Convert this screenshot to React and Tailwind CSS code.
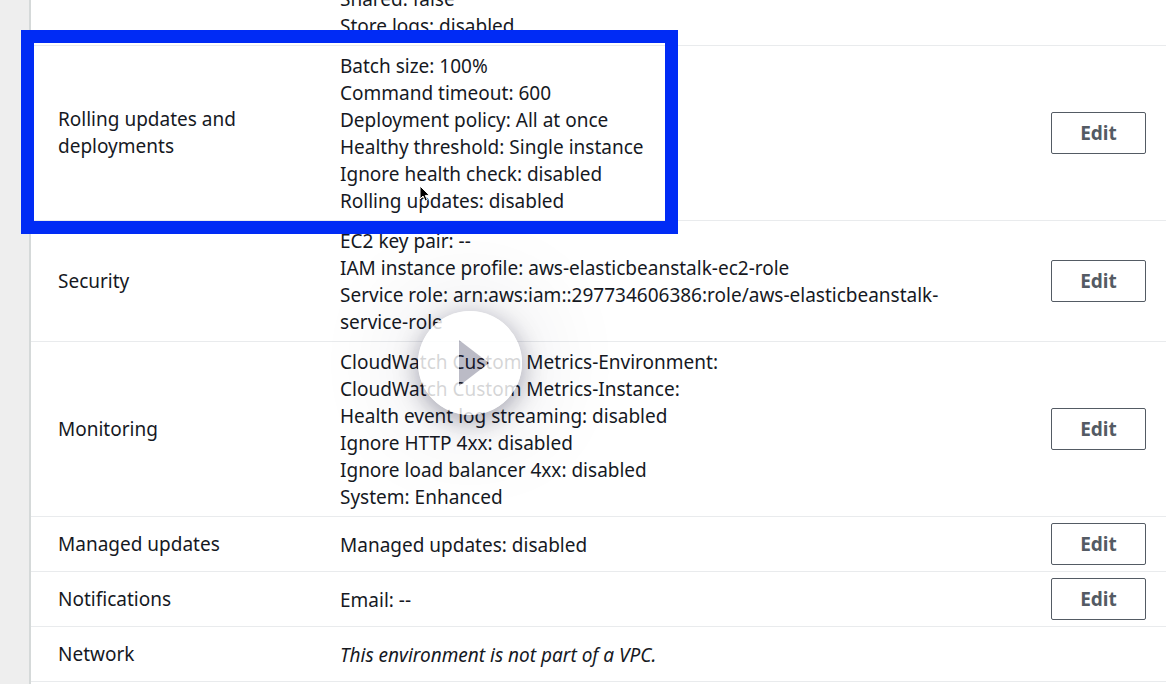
const rows = [
  { name: "", lines: ["Shared: false", "Store logs: disabled"], editable: false },
  {
    name: "Rolling updates and deployments",
    lines: [
      "Batch size: 100%",
      "Command timeout: 600",
      "Deployment policy: All at once",
      "Healthy threshold: Single instance",
      "Ignore health check: disabled",
      "Rolling updates: disabled",
    ],
    editable: true,
  },
  {
    name: "Security",
    lines: [
      "EC2 key pair: --",
      "IAM instance profile: aws-elasticbeanstalk-ec2-role",
      "Service role: arn:aws:iam::297734606386:role/aws-elasticbeanstalk-service-role",
    ],
    editable: true,
  },
  {
    name: "Monitoring",
    lines: [
      "CloudWatch Custom Metrics-Environment:",
      "CloudWatch Custom Metrics-Instance:",
      "Health event log streaming: disabled",
      "Ignore HTTP 4xx: disabled",
      "Ignore load balancer 4xx: disabled",
      "System: Enhanced",
    ],
    editable: true,
  },
  { name: "Managed updates", lines: ["Managed updates: disabled"], editable: true },
  { name: "Notifications", lines: ["Email: --"], editable: true },
  { name: "Network", lines: ["This environment is not part of a VPC."], editable: false, note: true },
];

function ConfigRow({ row }) {
  return (
    <tr className="h-[55px] border-b border-[#e9ebed]">
      <th scope="row" className="py-1.5 pr-10 pl-[27px] text-left align-middle font-normal">
        {row.name}
      </th>
      <td className={row.note ? "pt-[7px] pr-24 pb-[5px] align-middle italic" : "pt-[7px] pr-24 pb-[5px] align-middle"}>
        {row.lines.map((line) => (
          <p key={line}>{line}</p>
        ))}
      </td>
      <td className="py-1.5 pr-5 align-middle">
        {row.editable && (
          <button
            type="button"
            aria-label={`Edit ${row.name}`}
            className="block h-[42px] w-full rounded-[2px] border border-[#545b64] bg-white font-bold text-[#545b64]"
          >
            Edit
          </button>
        )}
      </td>
    </tr>
  );
}

function Pointer() {
  return (
    <svg className="pointer-events-none absolute top-[185px] left-[419px] h-[18px] w-3" viewBox="0 0 12 18" aria-hidden="true">
      <path d="M1 1v13l3-3 2.2 5 2.2-1-2.1-4.6h4.2z" fill="#000" stroke="#fff" strokeWidth="1" />
    </svg>
  );
}

function PlayButton() {
  return (
    <button
      type="button"
      aria-label="Play"
      className="absolute top-[311px] left-[418px] size-[104px] rounded-full shadow-[0_6px_24px_rgba(20,20,50,0.36),0_0_110px_rgba(20,20,50,0.16)]"
    >
      <svg viewBox="0 0 104 104" className="size-full" aria-hidden="true">
        <path
          fillRule="evenodd"
          d="M52 0a52 52 0 1 1 0 104a52 52 0 1 1 0-104zM41 29v46L71 52z"
          fill="#fff"
          fillOpacity="0.82"
        />
        <path d="M41 29v46L71 52z" fill="#14143c" fillOpacity="0.29" />
      </svg>
    </button>
  );
}

export default function App() {
  return (
    <main className="relative flex h-screen overflow-hidden bg-[#eeeeee] pl-[29px] font-['Noto_Sans',sans-serif] text-[19px] leading-[27px] text-[#16191f]">
      <section className="flex-1 border-l-2 border-[#d5d9d9] bg-white">
        <table className="-mt-[21px] w-full table-fixed border-collapse border-b border-[#e9ebed]">
          <colgroup>
            <col className="w-[309px]" />
            <col />
            <col className="w-[115px]" />
          </colgroup>
          <tbody>
            {rows.map((row) => (
              <ConfigRow key={row.name} row={row} />
            ))}
          </tbody>
        </table>
      </section>
      <div className="pointer-events-none absolute top-[30px] left-[21px] h-[204px] w-[657px] border-[13px] border-[#002bf5]" />
      <Pointer />
      <PlayButton />
    </main>
  );
}
